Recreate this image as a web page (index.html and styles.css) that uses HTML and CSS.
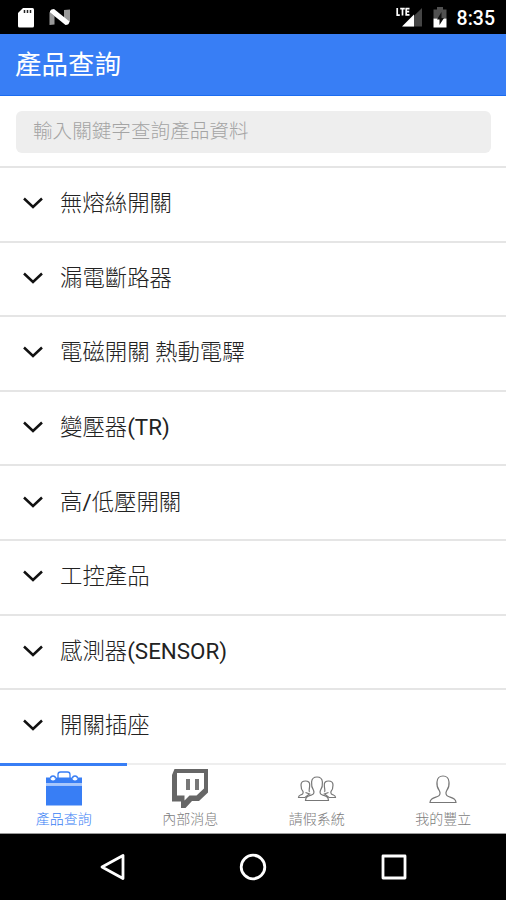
FILE: index.html
```html
<!DOCTYPE html>
<html lang="zh-Hant">
<head>
<meta charset="utf-8">
<title>產品查詢</title>
<link rel="stylesheet" href="styles.css">
</head>
<body>
<div class="status">
  <svg class="status-left" viewBox="0 0 80 34">
    <path d="M23 8h9.500q1.500 0 1.500 1.500V26q0 1.500-1.500 1.500H19.500Q18 27.500 18 26V13z" fill="#fff"/>
    <path d="M24.500 10v3M27.500 10v3M30.500 10v3" stroke="#222" stroke-width="1.500"/>
    <path d="M49.500 12l5 4v8.500l-5 .5zM64 10l6-.5V22l-6-3z" fill="#999"/>
    <path d="M50 11q1-2 4-2l15.500 12.500q-.5 3.500-4 3.500L50 12.500z" fill="#fff"/>
  </svg>
  <div class="status-right">
    <svg class="status-icons" viewBox="0 0 56 34">
      <path d="M26 8v18.500H7z" fill="#454545"/>
      <path d="M18 14.500v12H6z" fill="#fff"/>
      <path d="M1.200 8v7.200h2.600M4.200 8.700h4.600M6.500 8.700v6.800M13.500 8.700h-3.300v6.100h3.300M10.200 11.700h3" fill="none" stroke="#fff" stroke-width="1.700"/>
      <path d="M37.500 9.500h3.500v-2.500h6v2.500h3.500v9h-13z" fill="#505050"/>
      <path d="M37.500 18.500h13v9h-13z" fill="#fff"/>
      <path d="M45.500 12l-4.500 7.500h2.500V25l4.500-7h-2.500z" fill="#111"/>
    </svg>
    <span class="clock">8:35</span>
  </div>
</div>
<header class="header"><h1>產品查詢</h1></header>
<main>
  <div class="search"><input type="text" placeholder="輸入關鍵字查詢產品資料"></div>
  <ul class="list">
    <li><svg class="chevron" viewBox="0 0 20 12"><path d="M1 1.500l9 8.500 9-8.500"/></svg><span>無熔絲開關</span></li>
    <li><svg class="chevron" viewBox="0 0 20 12"><path d="M1 1.500l9 8.500 9-8.500"/></svg><span>漏電斷路器</span></li>
    <li><svg class="chevron" viewBox="0 0 20 12"><path d="M1 1.500l9 8.500 9-8.500"/></svg><span>電磁開關 熱動電驛</span></li>
    <li><svg class="chevron" viewBox="0 0 20 12"><path d="M1 1.500l9 8.500 9-8.500"/></svg><span>變壓器<span class="latin">(TR)</span></span></li>
    <li><svg class="chevron" viewBox="0 0 20 12"><path d="M1 1.500l9 8.500 9-8.500"/></svg><span>高<span class="latin">/</span>低壓開關</span></li>
    <li><svg class="chevron" viewBox="0 0 20 12"><path d="M1 1.500l9 8.500 9-8.500"/></svg><span>工控產品</span></li>
    <li><svg class="chevron" viewBox="0 0 20 12"><path d="M1 1.500l9 8.500 9-8.500"/></svg><span>感測器<span class="latin">(SENSOR)</span></span></li>
    <li><svg class="chevron" viewBox="0 0 20 12"><path d="M1 1.500l9 8.500 9-8.500"/></svg><span>開關插座</span></li>
  </ul>
</main>
<nav class="tabs">
  <a class="tab active">
    <svg viewBox="0 0 40 40">
      <path d="M2 16.500h36v20H2z" fill="#387ef5"/>
      <path d="M2 14h36v2.500H2z" fill="#a9c7fb"/>
      <path d="M2 8.500h4q.5 3 3 3t3-3h16q.5 3 3 3t3-3h4v5.500H2z" fill="#387ef5"/>
      <path d="M6.500 9.500a2.500 2.500 0 0 1 5 0M28.500 9.500a2.500 2.500 0 0 1 5 0M14 9V5.500q0-2.500 2.500-2.500h7q2.500 0 2.500 2.500V9" fill="none" stroke="#387ef5" stroke-width="1.300"/>
    </svg>
    <span>產品查詢</span>
  </a>
  <a class="tab">
    <svg viewBox="0 0 40 40">
      <path fill-rule="evenodd" d="M4.500 0H38v23.500l-9 8.500h-7l-6.500 7H11v-6.500H2V6zM7 4v22.500h7.500v5l5-5h7l7.500-7V4z" fill="#666"/>
      <path d="M16 10h4v11h-4zM25 10h4v11h-4z" fill="#777"/>
    </svg>
    <span>內部消息</span>
  </a>
  <a class="tab">
    <svg viewBox="0 0 40 40" class="line">
      <path d="M8.500 31.500h23c-.2-4-3-4.500-6.500-5.700-2-.7-2.300-2.500-1.600-4.300 1.900-3 2.400-5.200 2-8.500-.3-3.500-2.200-5-5.400-5s-5.100 1.500-5.400 5c-.4 3.300.1 5.500 2 8.500.7 1.800.4 3.600-1.600 4.300-3.500 1.200-6.300 1.700-6.500 5.700z"/>
      <path d="M12.500 23c-1-1 0-2.500.2-7 .2-2.500-1.500-4-4.200-4S4 13.500 4 16c0 3 .5 5 2 6.500.6 2-.6 3-2.500 3.500-1.500.5-2 1-2 2.500h6.500l4.500-3.500-4-1.500"/>
      <path d="M27.500 23c1-1 0-2.500-.2-7-.2-2.500 1.500-4 4.200-4s4.500 1.500 4.500 4c0 3-.5 5-2 6.500-.6 2 .6 3 2.500 3.500 1.500.5 2 1 2 2.500H32L27.500 25l4-1.500"/>
    </svg>
    <span>請假系統</span>
  </a>
  <a class="tab">
    <svg viewBox="0 0 40 40" class="line">
      <path d="M7 33.500h26c-.2-4-3.500-4.500-7.500-6-2.800-1-3-3.500-2-5.500 1.800-2.500 3-5.500 2.500-9-.3-4-2.500-6-6-6s-5.700 2-6 6c-.5 3.500.7 6.500 2.500 9 1 2 .8 4.500-2 5.500-4 1.500-7.300 2-7.500 6z"/>
    </svg>
    <span>我的豐立</span>
  </a>
</nav>
<div class="sysnav">
  <svg viewBox="0 0 30 30"><path d="M25 3.500v23L4 15z"/></svg>
  <svg viewBox="0 0 30 30"><circle cx="15" cy="15" r="11.800"/></svg>
  <svg viewBox="0 0 30 30"><path d="M4 4h22v22H4z"/></svg>
</div>
</body>
</html>
```
FILE: styles.css
```css
* { box-sizing: border-box; }
body {
  margin: 0;
  width: 506px;
  height: 900px;
  display: flex;
  flex-direction: column;
  overflow: hidden;
  background: #fff;
  font-family: Roboto, "Noto Sans CJK TC", sans-serif;
}
.status {
  height: 34px;
  flex: none;
  display: flex;
  justify-content: space-between;
  background: #000;
  color: #fff;
}
.status-left { width: 80px; height: 34px; }
.status-right { display: flex; padding-right: 11px; }
.status-icons { width: 56px; height: 34px; margin-right: 5px; }
.clock { font-size: 19.500px; font-weight: 500; line-height: 37px; }
.header {
  height: 62px;
  flex: none;
  padding-left: 15px;
  background: #387ef5;
  border-bottom: 1px solid #1b6cf0;
  color: #fff;
}
.header h1 { margin: 0; font-size: 26.500px; font-weight: 400; line-height: 62px; }
main { flex: none; height: 667px; }
.search { height: 70px; padding: 15px 15px 0 16px; }
.search input {
  display: block;
  width: 100%;
  height: 42px;
  padding: 0 17px 1px;
  border: 0;
  border-radius: 6px;
  background: #eee;
  font: 300 19.600px Roboto, "Noto Sans CJK TC", sans-serif;
}
.search input::placeholder { color: #a4a4a4; opacity: 1; }
.list { margin: 0; padding: 0; list-style: none; }
.list li {
  height: 74.600px;
  display: flex;
  align-items: center;
  gap: 17px;
  padding: 0 0 2px 23px;
  border-top: 2px solid #e5e5e5;
  color: #222;
  font-size: 22.400px;
  font-weight: 300;
  line-height: 32px;
}
.latin { font-weight: 400; }
.chevron { width: 20px; height: 12px; fill: none; stroke: #111; stroke-width: 2.500; }
.tabs { flex: none; height: 71px; display: flex; background: #fff; border-bottom: 1px solid #999; }
.tab {
  flex: 1;
  display: flex;
  flex-direction: column;
  align-items: center;
  padding: 4px 0 0 1px;
  border-top: 2px solid #eee;
  color: #7c7c7c;
  font-size: 14px;
  font-weight: 300;
  line-height: 21px;
}
.tab.active { border-top: 3px solid #387ef5; padding-top: 3px; color: #387ef5; }
.tab svg { width: 40px; height: 40px; }
.tab .line { fill: none; stroke: #777; stroke-width: 1.200; }
.sysnav {
  flex: 1;
  display: flex;
  justify-content: center;
  align-items: center;
  gap: 110.500px;
  background: #000;
}
.sysnav svg { width: 30px; height: 30px; fill: none; stroke: #fff; stroke-width: 2.800; stroke-linejoin: round; }
```
